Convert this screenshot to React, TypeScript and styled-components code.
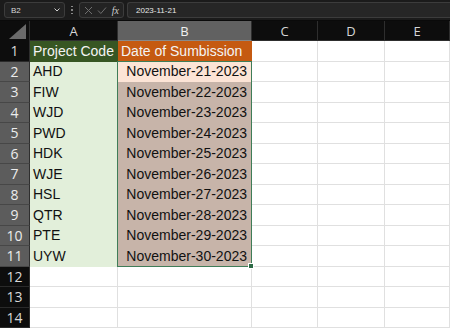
import React from 'react'
import styled, { createGlobalStyle } from 'styled-components'

const GlobalStyle = createGlobalStyle`
  html, body {
    margin: 0;
    padding: 0;
    background: #0d0d0d;
    overflow: hidden;
  }
  body {
    font-family: "Liberation Sans", Arial, sans-serif;
  }
`

const Page = styled.div`
  width: 450px;
  height: 328px;
  display: flex;
  flex-direction: column;
  background: #0d0d0d;
  overflow: hidden;
`

const FormulaBar = styled.div`
  height: 23px;
  display: flex;
  align-items: center;
  padding: 0 0 0 4px;
  background: #1b1b1b;
  border-bottom: 1px solid #0a0a0a;
  box-sizing: border-box;
`

const NameBox = styled.div`
  width: 61px;
  height: 16px;
  box-sizing: border-box;
  display: flex;
  align-items: center;
  justify-content: space-between;
  padding: 0 3px 0 6px;
  background: #232323;
  border: 1px solid #3c3c3c;
  border-radius: 3px;
  color: #d8d8d8;
  font-size: 8px;
`

const Dots = styled.div`
  width: 14px;
  display: flex;
  flex-direction: column;
  align-items: center;
  gap: 2px;
  span {
    width: 1.5px;
    height: 1.5px;
    background: #9a9a9a;
    border-radius: 50%;
  }
`

const FuncBox = styled.div`
  width: 45px;
  height: 16px;
  box-sizing: border-box;
  display: flex;
  align-items: center;
  justify-content: space-around;
  padding: 0 2px;
  background: #232323;
  border: 1px solid #3c3c3c;
  border-radius: 3px;
  margin-right: 3px;
`

const Fx = styled.span`
  font-family: "Liberation Serif", serif;
  font-style: italic;
  font-size: 10px;
  color: #cfcfcf;
`

const FormulaInput = styled.div`
  flex: 1;
  height: 16px;
  box-sizing: border-box;
  display: flex;
  align-items: center;
  padding-left: 8px;
  background: #262626;
  border: 1px solid #3c3c3c;
  border-right: none;
  border-radius: 3px 0 0 3px;
  color: #e6e6e6;
  font-size: 8px;
`

const Sheet = styled.div`
  position: relative;
  display: grid;
  grid-template-columns: 30px 88px 134px 66px 67px 1fr;
  grid-template-rows: 20px repeat(14, 20.5px);
`

const Corner = styled.div`
  background: #0d0d0d;
  border-right: 1px solid #2e2e2e;
  display: flex;
  align-items: flex-end;
  justify-content: flex-end;
  padding: 0 3px 2px 0;
  box-sizing: border-box;
`

const ColHead = styled.div<{ $active?: boolean }>`
  display: flex;
  align-items: center;
  justify-content: center;
  background: ${(p) => (p.$active ? '#616161' : '#0d0d0d')};
  color: ${(p) => (p.$active ? '#f0f0f0' : '#d6d6d6')};
  border-right: 1px solid #2e2e2e;
  border-bottom: 1px solid ${(p) => (p.$active ? '#8a8a8a' : '#2e2e2e')};
  box-sizing: border-box;
  font-family: "Open Sans", "Liberation Sans", sans-serif;
  font-size: 13px;
`

const RowHead = styled.div<{ $active?: boolean }>`
  display: flex;
  align-items: center;
  justify-content: center;
  background: ${(p) => (p.$active ? '#5c5c5c' : '#0d0d0d')};
  color: ${(p) => (p.$active ? '#ececec' : '#d8d8d8')};
  border-bottom: 1px solid ${(p) => (p.$active ? '#474747' : '#2a2a2a')};
  border-right: 1px solid #2e2e2e;
  box-sizing: border-box;
  font-family: "Open Sans", "Liberation Sans", sans-serif;
  font-size: 14px;
`

type Fill = 'none' | 'green' | 'orange' | 'mint' | 'peach' | 'taupe'

const fills: Record<Fill, string> = {
  none: '#ffffff',
  green: '#375623',
  orange: '#c55a11',
  mint: '#e2efda',
  peach: '#fce4d6',
  taupe: '#c7b4a9',
}

const Cell = styled.div<{ $fill: Fill; $right?: boolean }>`
  display: flex;
  align-items: center;
  justify-content: ${(p) => (p.$right ? 'flex-end' : 'flex-start')};
  padding: ${(p) => (p.$right ? '0 4px 0 0' : '0 0 0 3px')};
  background: ${(p) => fills[p.$fill]};
  color: ${(p) => (p.$fill === 'green' || p.$fill === 'orange' ? '#f4f4f4' : '#111111')};
  box-sizing: border-box;
  border-right: 1px solid ${(p) => (p.$fill === 'none' ? '#e0e0e0' : fills[p.$fill])};
  border-bottom: 1px solid ${(p) => (p.$fill === 'none' ? '#e0e0e0' : fills[p.$fill])};
  font-family: "Liberation Sans", Arial, sans-serif;
  font-size: 14px;
  white-space: nowrap;
  overflow: hidden;
`

const Selection = styled.div`
  position: absolute;
  grid-column: 3 / 4;
  grid-row: 3 / 13;
  top: -1px;
  left: -1px;
  right: 0;
  bottom: 0;
  border: 1px solid #3f7d58;
  pointer-events: none;
`

const Handle = styled.div`
  position: absolute;
  right: -3px;
  bottom: -3px;
  width: 4px;
  height: 4px;
  background: #2e6b47;
  border: 1px solid #ffffff;
`

const codes = ['AHD', 'FIW', 'WJD', 'PWD', 'HDK', 'WJE', 'HSL', 'QTR', 'PTE', 'UYW']
const columns = ['A', 'B', 'C', 'D', 'E']

export default function App() {
  const rows: React.ReactNode[] = []
  for (let r = 1; r <= 14; r++) {
    const i = r - 2
    const inData = r >= 2 && r <= 11
    rows.push(
      <RowHead key={`h${r}`} $active={inData}>
        {r}
      </RowHead>
    )
    if (r === 1) {
      rows.push(
        <Cell key={`a${r}`} $fill="green">Project Code</Cell>,
        <Cell key={`b${r}`} $fill="orange">Date of Sumbission</Cell>
      )
    } else if (inData) {
      rows.push(
        <Cell key={`a${r}`} $fill="mint">{codes[i]}</Cell>,
        <Cell key={`b${r}`} $fill={r === 2 ? 'peach' : 'taupe'} $right>
          November-{21 + i}-2023
        </Cell>
      )
    } else {
      rows.push(<Cell key={`a${r}`} $fill="none" />, <Cell key={`b${r}`} $fill="none" />)
    }
    rows.push(
      <Cell key={`c${r}`} $fill="none" />,
      <Cell key={`d${r}`} $fill="none" />,
      <Cell key={`e${r}`} $fill="none" />
    )
  }

  return (
    <Page>
      <GlobalStyle />
      <FormulaBar>
        <NameBox>
          B2
          <svg width="8" height="8" viewBox="0 0 8 8">
            <path d="M1.5 2.5 L4 5 L6.5 2.5" stroke="#cfcfcf" strokeWidth="1" fill="none" />
          </svg>
        </NameBox>
        <Dots>
          <span />
          <span />
          <span />
        </Dots>
        <FuncBox>
          <svg width="9" height="9" viewBox="0 0 9 9">
            <path d="M1 1 L8 8 M8 1 L1 8" stroke="#6e6e6e" strokeWidth="1" />
          </svg>
          <svg width="10" height="9" viewBox="0 0 10 9">
            <path d="M1 4.5 L3.8 7.5 L9 1.5" stroke="#6e6e6e" strokeWidth="1" fill="none" />
          </svg>
          <Fx>fx</Fx>
        </FuncBox>
        <FormulaInput>2023-11-21</FormulaInput>
      </FormulaBar>
      <Sheet>
        <Corner>
          <svg width="17" height="15" viewBox="0 0 17 15">
            <path d="M17 0 L17 15 L0 15 Z" fill="#6a6a6a" />
          </svg>
        </Corner>
        {columns.map((c) => (
          <ColHead key={c} $active={c === 'B'}>
            {c}
          </ColHead>
        ))}
        {rows}
        <Selection>
          <Handle />
        </Selection>
      </Sheet>
    </Page>
  )
}
